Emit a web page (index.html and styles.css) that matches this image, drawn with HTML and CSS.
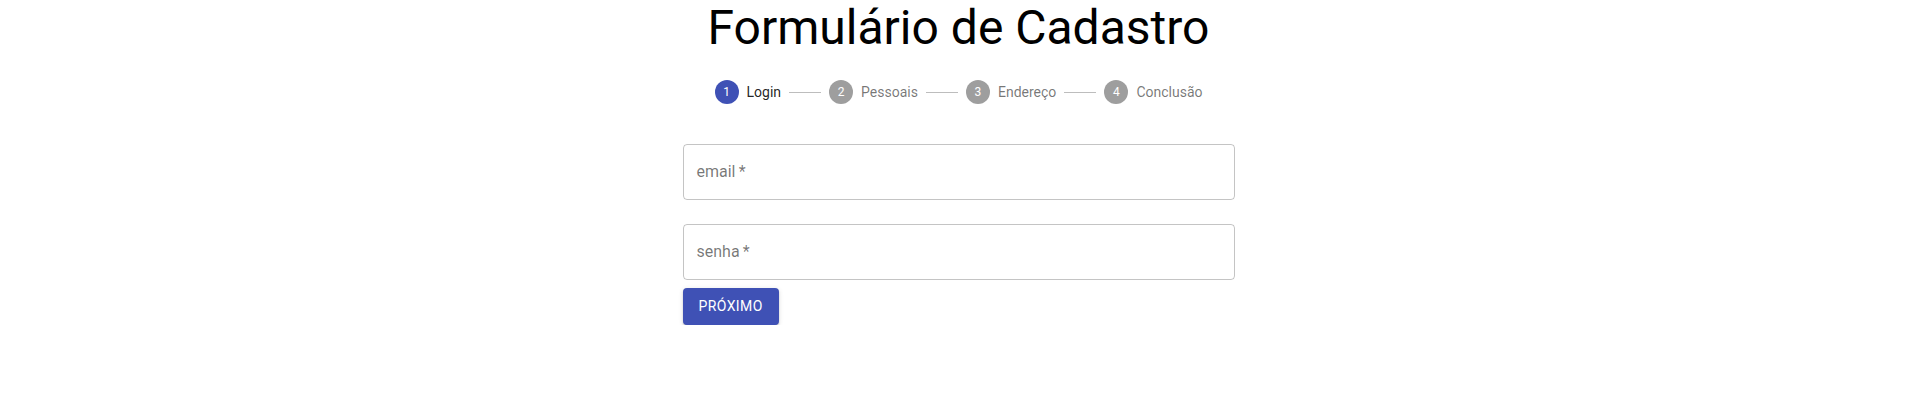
FILE: index.html
```html
<!DOCTYPE html>
<html lang="pt-BR">
<head>
<meta charset="utf-8">
<title>Formulário de Cadastro</title>
<link rel="stylesheet" href="styles.css">
</head>
<body>
<main class="container">
  <h1 class="title">Formulário de Cadastro</h1>
  <div class="stepper">
    <div class="step">
      <span class="step-icon active">1</span>
      <span class="step-label active">Login</span>
    </div>
    <div class="connector"><span class="line"></span></div>
    <div class="step">
      <span class="step-icon">2</span>
      <span class="step-label">Pessoais</span>
    </div>
    <div class="connector"><span class="line"></span></div>
    <div class="step">
      <span class="step-icon">3</span>
      <span class="step-label">Endereço</span>
    </div>
    <div class="connector"><span class="line"></span></div>
    <div class="step">
      <span class="step-icon">4</span>
      <span class="step-label">Conclusão</span>
    </div>
  </div>
  <form class="form">
    <div class="field">
      <label class="field-label" for="email">email&thinsp;*</label>
      <input class="field-input" id="email" type="email" required>
    </div>
    <div class="field">
      <label class="field-label" for="senha">senha&thinsp;*</label>
      <input class="field-input" id="senha" type="password" required>
    </div>
    <button class="btn" type="button">Próximo</button>
  </form>
</main>
</body>
</html>
```
FILE: styles.css
```css
* { box-sizing: border-box; }
html, body {
  margin: 0;
  padding: 0;
  background: #fff;
  font-family: Roboto, "Liberation Sans", Arial, sans-serif;
  color: rgba(0, 0, 0, 0.87);
}
.container {
  max-width: 600px;
  margin: 0 auto;
  padding: 0 24px;
}
.title {
  margin: 0;
  font-size: 48px;
  font-weight: 400;
  line-height: 1.167;
  text-align: center;
  color: #000;
}
.stepper {
  display: flex;
  align-items: center;
  padding: 24px;
}
.step {
  display: flex;
  align-items: center;
  padding: 0 8px;
}
.step-icon {
  width: 24px;
  height: 24px;
  border-radius: 50%;
  background: #9e9e9e;
  color: #fff;
  font-size: 12px;
  line-height: 24px;
  text-align: center;
  flex: none;
}
.step-icon.active { background: #3f51b5; }
.step-label {
  padding-left: 8px;
  font-size: 14px;
  line-height: 1.43;
  color: rgba(0, 0, 0, 0.54);
}
.step-label.active { color: rgba(0, 0, 0, 0.87); }
.connector {
  flex: 1 1 auto;
  display: flex;
}
.connector .line {
  flex: 1;
  border-top: 1px solid #bdbdbd;
}
.form {
  display: flex;
  flex-direction: column;
  align-items: flex-start;
}
.field {
  position: relative;
  width: 100%;
  margin: 16px 0 8px;
}
.field-input {
  display: block;
  width: 100%;
  height: 56px;
  padding: 18.5px 14px;
  border: 1px solid rgba(0, 0, 0, 0.23);
  border-radius: 4px;
  font: inherit;
  font-size: 16px;
  outline: none;
  background: transparent;
}
.field-label {
  position: absolute;
  left: 14px;
  top: 20px;
  font-size: 16px;
  line-height: 1;
  color: rgba(0, 0, 0, 0.54);
  pointer-events: none;
}
.btn {
  min-width: 64px;
  padding: 6px 16px;
  border: 0;
  border-radius: 4px;
  background: #3f51b5;
  color: #fff;
  font-family: Roboto, "Liberation Sans", Arial, sans-serif;
  font-size: 14px;
  font-weight: 400;
  line-height: 1.75;
  letter-spacing: 0.02857em;
  text-transform: uppercase;
  box-shadow: 0 3px 1px -2px rgba(0,0,0,0.2), 0 2px 2px 0 rgba(0,0,0,0.14), 0 1px 5px 0 rgba(0,0,0,0.12);
  cursor: pointer;
}
```
